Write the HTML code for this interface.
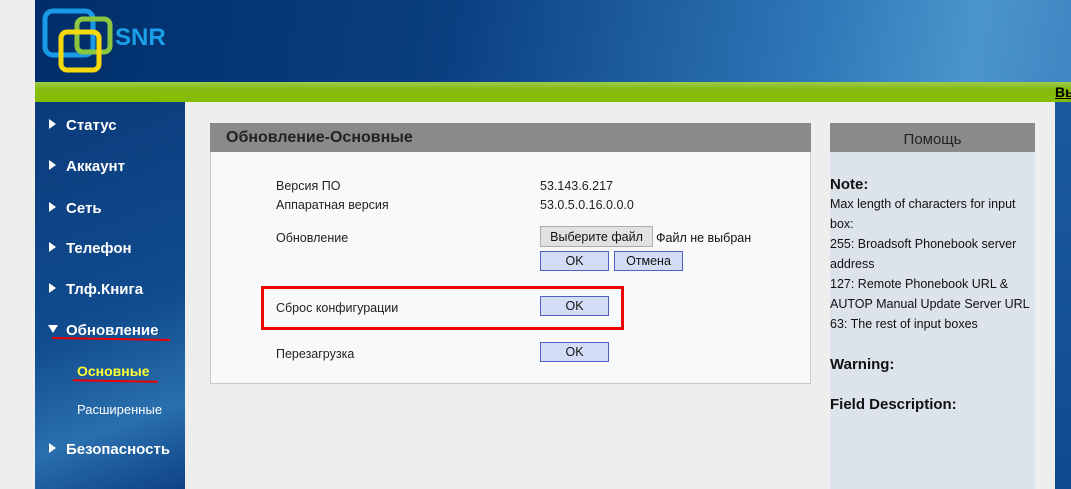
<!DOCTYPE html>
<html><head><meta charset="utf-8"><style>
*{margin:0;padding:0;box-sizing:border-box}
body{width:1071px;height:489px;overflow:hidden;background:#eeeeee;font-family:"Liberation Sans","DejaVu Sans",sans-serif;position:relative}
.abs{position:absolute}
#hdr{left:35px;top:0;width:1036px;height:82px;background:linear-gradient(100deg,#002e6a 0%,#0a3f80 40%,#2f78b8 75%,#4b95cc 90%,#3f86c2 100%)}
#green{left:35px;top:82px;width:1036px;height:20px;background:linear-gradient(#9ccc4c 0,#86bb10 35%,#86bc00 100%)}
#side{left:35px;top:102px;width:150px;height:387px;background:linear-gradient(160deg,#0b3b7c 0%,#104c8e 55%,#2a6fae 80%,#0e4384 100%)}
#right{left:1055px;top:102px;width:16px;height:387px;background:linear-gradient(#1c5aa0,#0e4a92)}
.mi{position:absolute;left:66px;color:#fff;font-weight:bold;font-size:15px;margin-top:2px}
.ar{position:absolute;left:49px;width:0;height:0;border-top:5px solid transparent;border-bottom:5px solid transparent;border-left:7px solid #fff}
.ad{position:absolute;left:48px;border-left:5px solid transparent;border-right:5px solid transparent;border-top:8px solid #fff}
.lbl{position:absolute;left:276px;font-size:12.5px;color:#222;margin-top:1px}
.val{position:absolute;left:540px;font-size:12.5px;color:#222;margin-top:1px}
.btn{position:absolute;height:20px;width:69px;background:#d3def6;border:1px solid #5060c0;font-size:12.5px;text-align:center;line-height:19px;color:#111}
.hp{position:absolute;left:830px;font-size:12.5px;color:#111;margin-top:1px}
.hb{position:absolute;left:830px;font-size:15px;font-weight:bold;color:#111;margin-top:1px}
</style></head><body>
<div class="abs" id="hdr"></div>
<svg class="abs" style="left:40px;top:8px" width="140" height="68">
<rect x="5" y="3" width="48" height="44" rx="8" fill="none" stroke="#1a9ae6" stroke-width="5"/>
<rect x="37" y="11" width="33" height="33" rx="6" fill="none" stroke="#8cc63f" stroke-width="5"/>
<rect x="21" y="24" width="38" height="38" rx="6" fill="none" stroke="#f6d80f" stroke-width="5"/>
<text x="75" y="37" font-family="Liberation Sans" font-weight="bold" font-size="24" fill="#1aa0e8">SNR</text>
</svg>
<div class="abs" id="green"></div>
<div class="abs" style="left:1055px;top:84px;font-size:14px;font-weight:bold;text-decoration:underline;color:#000">Вы</div>
<div class="abs" id="side"></div>
<div class="abs" id="right"></div>
<div class="ar" style="top:119px"></div><div class="mi" style="top:115px">Статус</div>
<div class="ar" style="top:160px"></div><div class="mi" style="top:156px">Аккаунт</div>
<div class="ar" style="top:202px"></div><div class="mi" style="top:198px">Сеть</div>
<div class="ar" style="top:242px"></div><div class="mi" style="top:238px">Телефон</div>
<div class="ar" style="top:283px"></div><div class="mi" style="top:279px">Тлф.Книга</div>
<div class="ad" style="top:325px"></div><div class="mi" style="top:320px">Обновление</div>
<div class="abs" style="left:52px;top:338px;width:118px;height:2px;background:#e00;transform:rotate(1deg)"></div>
<div class="abs" style="left:77px;top:363px;color:#ffff33;font-weight:bold;font-size:14px">Основные</div>
<div class="abs" style="left:73px;top:380px;width:85px;height:2px;background:#e00;transform:rotate(1deg)"></div>
<div class="abs" style="left:77px;top:402px;color:#fff;font-size:13px">Расширенные</div>
<div class="ar" style="top:443px"></div><div class="mi" style="top:439px">Безопасность</div>

<div class="abs" style="left:210px;top:123px;width:601px;height:29px;background:#8a8a8a"></div>
<div class="abs" style="left:226px;top:129px;font-size:16px;font-weight:bold;color:#222">Обновление-Основные</div>
<div class="abs" style="left:210px;top:152px;width:601px;height:232px;background:#f8f9fb;border:1px solid #c8c8c8;border-top:none"></div>
<div class="lbl" style="top:178px">Версия ПО</div><div class="val" style="top:178px">53.143.6.217</div>
<div class="lbl" style="top:197px">Аппаратная версия</div><div class="val" style="top:197px">53.0.5.0.16.0.0.0</div>
<div class="lbl" style="top:230px">Обновление</div>
<div class="abs" style="left:540px;top:226px;width:113px;height:21px;background:#e1e1e1;border:1px solid #adadad;font-size:12.5px;text-align:center;line-height:20px;color:#111">Выберите файл</div>
<div class="abs" style="left:656px;top:231px;font-size:12.5px;color:#111">Файл не выбран</div>
<div class="btn" style="left:540px;top:251px">OK</div>
<div class="btn" style="left:614px;top:251px">Отмена</div>
<div class="abs" style="left:261px;top:286px;width:363px;height:44px;border:3px solid #ee0000"></div>
<div class="lbl" style="top:300px">Сброс конфигурации</div>
<div class="btn" style="left:540px;top:296px">OK</div>
<div class="lbl" style="top:346px">Перезагрузка</div>
<div class="btn" style="left:540px;top:342px">OK</div>

<div class="abs" style="left:830px;top:123px;width:205px;height:29px;background:#8a8a8a;font-size:15px;color:#222;text-align:center;line-height:33px">Помощь</div>
<div class="abs" style="left:830px;top:152px;width:205px;height:337px;background:#dce3ea"></div>
<div class="hb" style="top:175px">Note:</div>
<div class="hp" style="top:196px">Max length of characters for input</div>
<div class="hp" style="top:216px">box:</div>
<div class="hp" style="top:236px">255: Broadsoft Phonebook server</div>
<div class="hp" style="top:256px">address</div>
<div class="hp" style="top:276px">127: Remote Phonebook URL &amp;</div>
<div class="hp" style="top:296px">AUTOP Manual Update Server URL</div>
<div class="hp" style="top:316px">63: The rest of input boxes</div>
<div class="hb" style="top:355px">Warning:</div>
<div class="hb" style="top:395px">Field Description:</div>
</body></html>
